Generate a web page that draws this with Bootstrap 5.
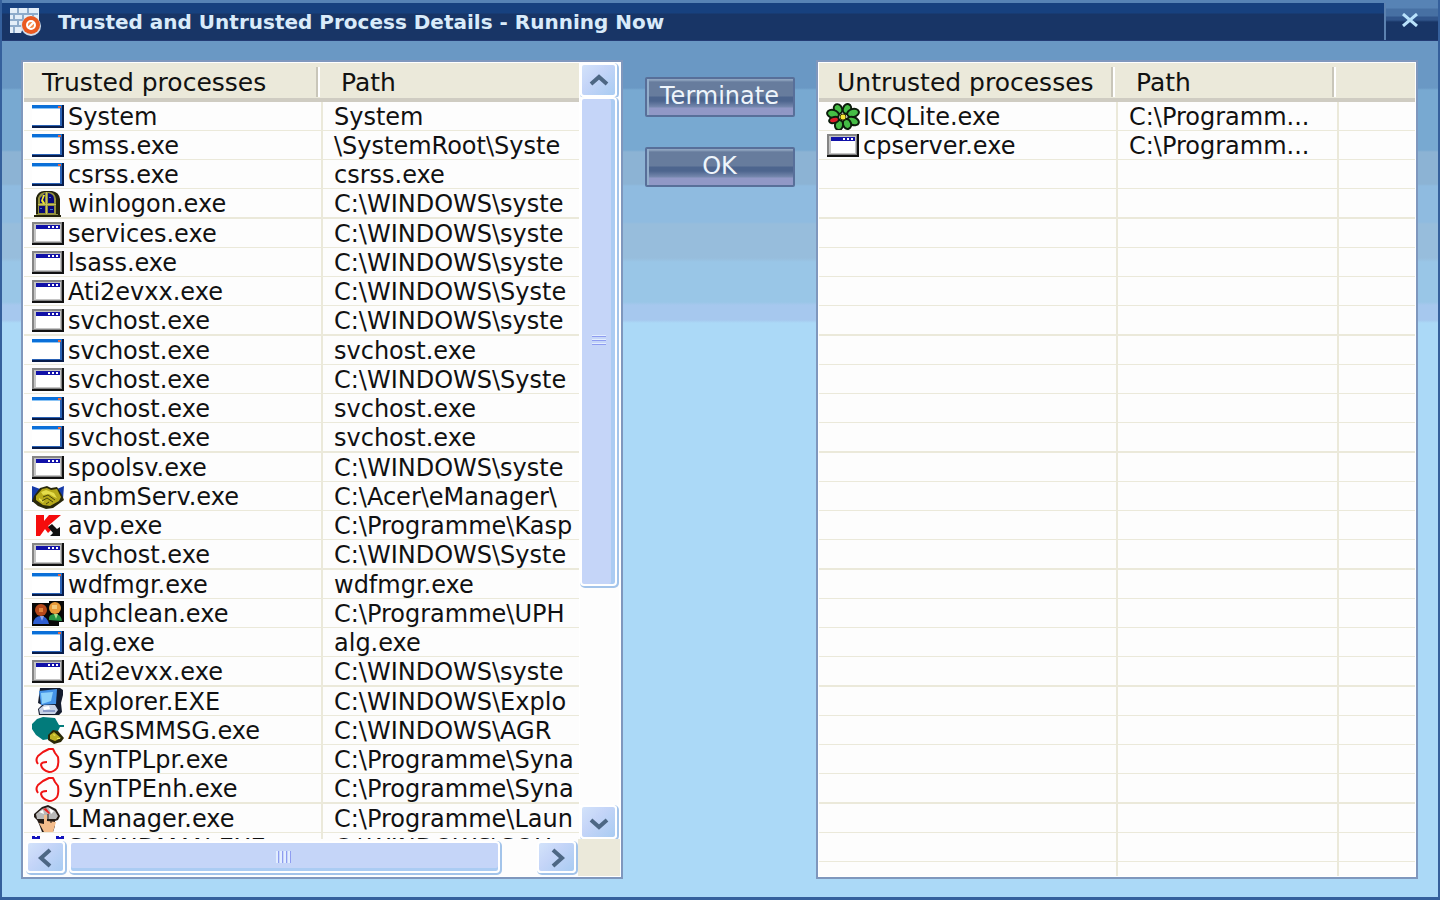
<!DOCTYPE html>
<html lang="en">
<head>
<meta charset="utf-8">
<meta name="viewport" content="width=device-width, initial-scale=1">
<title>Trusted and Untrusted Process Details - Running Now</title>
<link href="https://cdn.jsdelivr.net/npm/bootstrap@5.3.0/dist/css/bootstrap.min.css" rel="stylesheet">
<style>
  :root { --beige: #ebe9da; --navy: #183566; --sb: #c5d5f8; }
  body { font-family: "DejaVu Sans", sans-serif; font-size: 24px; line-height: 28px; color: #111; }
  .app-window {
    height: 100vh; min-height: 500px;
    border: solid #35609c; border-width: 0 2px 3px 2px;
    background: linear-gradient(#6a98c4 88px, #78a9d1 90px 150px, #8cb3d4 152px 184px, #8fbbe0 186px 222px,
      #97bddc 224px 258px, #99c6e7 262px 302px, #a6c8ee 305px 320px, #abd9f7 323px);
  }
  .title-bar {
    height: 41px; border-top: 3px solid #5783b5; border-bottom: 1px solid #243c75;
    background: linear-gradient(#17417f 10px, var(--navy) 11px);
  }
  .title-bar h1 { font-size: 20px; line-height: 24px; color: #d9ebfa; }
  .btn-shut {
    width: 54px; height: 37px; border-radius: 0; border: 0; border-left: 2px solid #5c82b0;
    background: linear-gradient(#5783b5 5px, #4770a3 6px 13px, #31558b 14px 17px, var(--navy) 19px);
  }
  .btn-shut:hover { filter: brightness(1.15); }
  .btn-shut svg { margin: 0 4px 5px 0; }
  .work-area { padding: 19px 20px 18px 19px; }
  .list-pane { flex: 1 1 0; background: #fff; border: 2px solid #7f97bd; padding: 1px; }
  .list-pane .viewport { background: #fdfdfd; }
  .proc-table { table-layout: fixed; width: 100%; border-collapse: separate; border-spacing: 0; }
  .proc-table th {
    height: 39px; padding: 4px 0 0 18px; font-weight: 400; background: var(--beige);
    border-bottom: 4px solid #cfccc2; position: relative; white-space: nowrap; font-size: 25px;
  }
  .proc-table th.split::after {
    content: ""; position: absolute; right: 3px; top: 4px; height: 30px; width: 4px;
    border-left: 2px solid #c9c6b9; border-right: 2px solid #fff;
  }
  .proc-table td {
    height: 29px; line-height: 26px; padding: 2px 0 0 11px; white-space: nowrap; overflow: hidden;
    border-bottom: 1px solid #ebe9da; border-right: 2px solid #ebe9da;
  }
  .proc-table td:first-child { padding-left: 7px; }
  .proc-table td:last-child { border-right: 0; }
  .proc-table tr:nth-child(4n) td { height: 30px; border-bottom-width: 2px; }
  .proc-table svg { width: 34px; height: 28px; display: block; flex: none; }
  .proc-name { height: 26px; gap: 3px; }
  .col-name { width: 299px; } .col-path { width: 221px; }
  .btn-glossy {
    width: 150px; height: 40px; padding: 0 0 2px; border: 2px solid #586f99; border-radius: 2px; color: #eef5fb; font-size: 24px; line-height: 28px;
    background: linear-gradient(#8fa4bf 1px, #677c9d 3px 17px, #4d658e 18px 22px, #7688ae 28px, #9198c6 29px);
    box-shadow: inset 2px 0 0 #93aecb;
  }
  .btn-glossy:hover { color: #fff; filter: brightness(1.1); }
  .side-buttons { width: 193px; padding-top: 17px; gap: 30px; }
  .v-scroll { width: 41px; padding: 0 1px; }
  .h-scroll { height: 37px; background: #fdfdfd; padding: 2px 2px 1px; }
  .sb-part {
    border: 2px solid #fff; border-radius: 4px; padding: 0;
    background: linear-gradient(135deg, #d3e3fa, var(--sb) 40%, #a9ccf2);
    box-shadow: 1px 1px 0 1px #a3c4ea;
  }
  .sb-part svg { width: 22px; height: 22px; }
  .sb-part.thumb { background: var(--sb); }
  .v-scroll .sb-part { width: 37px; }
  .v-scroll .sb-btn { height: 34px; }
  .v-scroll .thumb { height: 69%; box-shadow: 1px 1px 0 1px #a3c4ea, inset -4px 0 0 #abccf3; }
  .v-scroll .track { background: #fdfdfd; }
  .h-scroll .sb-btn { width: 39px; height: 32px; }
  .h-scroll .thumb { height: 32px; width: 92%; box-shadow: 1px 1px 0 1px #a3c4ea, inset 0 -3px 0 #abccf3; }
  .grip-v { width: 14px; height: 12px; background: repeating-linear-gradient(#e2edff 0 1px, #8e9cf0 1px 2px, #c5d5f8 2px 4px); }
  .grip-h { width: 16px; height: 12px; background: repeating-linear-gradient(90deg, #e2edff 0 2px, #8e9cf0 2px 3px, #c5d5f8 3px 4px); }
  .corner { width: 42px; background: var(--beige); }
</style>
</head>
<body>
<svg class="d-none" aria-hidden="true">
  <symbol id="i-blank" viewBox="0 0 34 28">
    <path fill="#fff" d="M1 2h31v22H1z"/><path fill="#0a6fd8" d="M1 2h30v3H1z"/><path fill="#8cc4f5" d="M1 5h29v1H1z"/>
    <path fill="#e8683c" d="M27 3h3v2h-3z"/><path fill="#2a62b5" d="M29 5h2v18h-2zM1 22h29v1H1z"/><path fill="#071c4a" d="M31 2h2v23H1v-2h30z"/>
  </symbol>
  <symbol id="i-app" viewBox="0 0 34 28">
    <path fill="#858585" d="M1 2h31v22H1z"/><path fill="#c4c4c4" d="M3 4h27v18H3z"/><path fill="#fff" d="M5 9h24v12H5z"/>
    <path fill="#1111a8" d="M5 5h24v4H5z"/><path fill="#fff" d="M17 6h2v2h-2zM21 6h2v2h-2zM25 6h2v2h-2z"/><path fill="#111" d="M31 2h2v23H1v-2h30z"/>
  </symbol>
  <symbol id="i-window" viewBox="0 0 34 28">
    <path fill="#23220c" d="M5 25V8q2-7 8-7h8q7 1 8 8v16h1v2H3v-2z"/><path fill="#93913f" d="M7 24V8q2-6 8-6h3q6 0 7 7v15h2v1H5v-1z"/>
    <path fill="#080878" d="M9 13V8l5-5v10zM17 3q6 1 6 6v4h-6zM8 16h6v7H8zM17 16h6v7h-6z"/><path fill="#f1e62d" d="m12 5-2 6 3 4 1-2-2-3 2-5z"/>
    <path fill="#c9c35a" d="M7 14h18v1H7zM15 2h1v22h-1z"/><path fill="#4472c8" d="M18 7h2v1h-2zM9 18h2v1H9zM19 19h3v1h-3z"/>
  </symbol>
  <symbol id="i-shake" viewBox="0 0 34 28">
    <path fill="#153aa8" d="m1 3 8 3v12l-8 1zM33 3l-7 3v12l6-2z"/><path fill="#29280a" d="m3 13 6-8 7-2 4 2 6-1 5 8 2 5-4 3-7 5-7 1-8-3-6-5z"/>
    <path fill="#b6a91a" d="m5 13 6-7 5-1 4 2 6-1 4 8-2 4-9 5-7-1-7-5z"/><path fill="#e5dd4b" d="m10 9 5-2 8 3 3 5-3-1-5-3-6 1zM8 15l5 3-1 2-4-3z"/>
    <path fill="none" stroke="#4b470a" d="m12 14 5-2 7 5M11 18l5-3 6 4M15 21l3-2"/>
  </symbol>
  <symbol id="i-k" viewBox="0 0 34 28">
    <path fill="#f50c0c" d="M5 3h8v6l5-6h12L17 14l3 4-3 3-3-4-5 7H5z"/><path fill="#111" d="m17 15 4-3 5 5 3-2v9H19l3-3z"/>
  </symbol>
  <symbol id="i-users" viewBox="0 0 34 28">
    <path fill="#080808" d="M1 3h17V1h15v21h-5v4H1z"/><circle cx="10" cy="10" r="6" fill="#b5481b"/><circle cx="24" cy="8" r="6" fill="#e99b3a"/>
    <path fill="#f4ca7b" d="M21 5h5v4h-5z"/><path fill="#e3843d" d="M8 8h4v4H8z"/><path fill="#2e5ed2" d="M2 24q1-8 8-8 6 0 8 8z"/><path fill="#269344" d="M18 20q-1-6 6-6 6 0 7 7z"/>
    <path fill="#8ca4ef" d="m9 16 2 5 2-5z"/><path fill="#a9df8e" d="m23 14 2 5 2-5z"/>
  </symbol>
  <symbol id="i-pc" viewBox="0 0 34 28">
    <path fill="#151c2e" d="M9 0h20l3 2v5l-2 8 1 9-3 3H8l-1-6 4-4-4-2z"/><path fill="#4493e8" d="m8 3 18-2-1 15-15 1z"/><path fill="#8ed2fb" d="m10 5 12-1-2 9-9 3z"/>
    <path fill="#c8d2e6" d="m8 21 5-4h11l3 5-3 4H9z"/><path fill="#8b9cc9" d="M12 22h12v2H12z"/><path fill="#fff" d="m12 19 6-1 1 3-6 1z"/>
  </symbol>
  <symbol id="i-globe" viewBox="0 0 34 28">
    <path fill="#027b7b" d="M1 7 6 2l6-2 12 1 4 7h5v2h-4l-3 6-8 6-6 1-7-5-4-6z"/><path fill="#2a2907" d="m17 18 5-5 5 1 6 7-3 4-7 2-6-4z"/><path fill="#bdb223" d="m19 18 4-3 7 6-6 3-5-2z"/><path fill="#f1e75b" d="m22 17 3 1-2 1zM26 21h3v1h-3z"/>
  </symbol>
  <symbol id="i-syn" viewBox="0 0 34 28">
    <path fill="none" stroke="#f01414" stroke-width="2" stroke-linejoin="round" d="M7 18q-3-4 0-8l5-4 6-3 4 0 2 4 3 4q1 7-1 11-3 4-8 4-7-2-8-7 0-3 6-3"/>
  </symbol>
  <symbol id="i-hand" viewBox="0 0 34 28">
    <path fill="#231a15" d="m3 9 8-7 6-2 8 4 4 7-2 4-3 1v5l-2 6H11l-3-8-2-4-3-3z"/><path fill="#b9b9b9" d="m5 9 6-5 6-2 7 4 3 5-2 3H6z"/><path fill="#fff" d="m18 3 5 3-3 3zM8 7l4-2 1 4z"/><path fill="#eb2323" d="m12 4 3-1 4 5-1 1z"/>
    <path fill="#f4bd8c" d="M13 10h3v6l9 1-3 10h-9l-5-9 5 1z"/><path stroke="#231a15" d="M17 9v6M20 15v3"/>
  </symbol>
  <symbol id="i-sound" viewBox="0 0 34 28"><path fill="#1212bd" d="M1 2h3v1h2V2h3v5H1zM25 2h3v1h2V2h3v5h-8z"/></symbol>
  <symbol id="i-flower" viewBox="0 0 34 28">
    <g fill="#45bd45" stroke="#0c1c0c" stroke-width="2">
      <ellipse cx="12" cy="6" rx="4" ry="5" transform="rotate(-25 12 6)"/><ellipse cx="21" cy="6" rx="4" ry="5" transform="rotate(20 21 6)"/>
      <ellipse cx="7" cy="11" rx="6" ry="4" transform="rotate(15 7 11)"/><ellipse cx="27" cy="10" rx="6" ry="4" transform="rotate(-15 27 10)"/>
      <ellipse cx="27" cy="18" rx="6" ry="4" transform="rotate(20 27 18)"/><ellipse cx="21" cy="21" rx="4" ry="5" transform="rotate(-20 21 21)"/><ellipse cx="13" cy="22" rx="4" ry="5" transform="rotate(10 13 22)"/>
      <ellipse cx="8" cy="17" rx="5" ry="3" fill="#df1a28" transform="rotate(-15 8 17)"/>
    </g><circle cx="17" cy="14" r="3" fill="#f7e635" stroke="#3d3a06"/>
  </symbol>
</svg>

<div class="app-window d-flex flex-column overflow-hidden">
  <header class="title-bar d-flex align-items-center flex-shrink-0">
    <svg class="ms-1 me-3 flex-shrink-0" width="36" height="32" viewBox="0 0 36 32" aria-hidden="true">
      <path fill="#e3eef8" d="M4 2h29v12H20l-5 13H4z"/>
      <path stroke="#8eaccb" stroke-width="2" fill="none" d="M4 8h28M4 14h20M4 20h12M12 2v6M22 2v6M8 8v6M17 8v6M27 8v6M12 14v6M8 20v7"/>
      <circle cx="25" cy="20" r="10" fill="#cfdcea"/><circle cx="25" cy="19" r="9" fill="#ea5a20"/>
      <circle cx="25" cy="19" r="4" fill="#f58b4a" stroke="#fff" stroke-width="2"/><path stroke="#fff" stroke-width="2" d="m22 22 6-6"/>
    </svg>
    <h1 class="mb-0 fw-bold text-nowrap flex-grow-1">Trusted and Untrusted Process Details - Running Now</h1>
    <button type="button" class="btn btn-shut p-0 flex-shrink-0" aria-label="Close">
      <svg width="18" height="14" viewBox="0 0 18 14"><path d="m2 1 14 12M16 1 2 13" stroke="#b9e2fb" stroke-width="3"/></svg>
    </button>
  </header>

  <main class="work-area d-flex flex-grow-1 overflow-hidden">
    <section class="list-pane d-flex flex-column overflow-hidden">
      <div class="d-flex flex-grow-1 overflow-hidden">
        <div class="viewport flex-grow-1 overflow-hidden">
          <table class="proc-table">
            <colgroup><col class="col-name"><col></colgroup>
            <thead><tr><th scope="col" class="split">Trusted processes</th><th scope="col">Path</th></tr></thead>
            <tbody id="trusted"></tbody>
          </table>
        </div>
        <div class="v-scroll d-flex flex-column flex-shrink-0">
          <button type="button" class="sb-part sb-btn" aria-label="Scroll up"><svg viewBox="0 0 22 22"><path d="m3 14 8-7 8 7" fill="none" stroke="#4d6784" stroke-width="4"/></svg></button>
          <div class="track flex-grow-1"><div class="sb-part thumb d-flex align-items-center justify-content-center"><span class="grip-v"></span></div></div>
          <button type="button" class="sb-part sb-btn" aria-label="Scroll down"><svg viewBox="0 0 22 22"><path d="m3 8 8 7 8-7" fill="none" stroke="#4d6784" stroke-width="4"/></svg></button>
        </div>
      </div>
      <div class="d-flex flex-shrink-0">
        <div class="h-scroll d-flex flex-grow-1">
          <button type="button" class="sb-part sb-btn" aria-label="Scroll left"><svg viewBox="0 0 22 22"><path d="m15 3-9 8 9 8" fill="none" stroke="#4d6784" stroke-width="4"/></svg></button>
          <div class="flex-grow-1 ps-1"><div class="sb-part thumb d-flex align-items-center justify-content-center"><span class="grip-h"></span></div></div>
          <button type="button" class="sb-part sb-btn" aria-label="Scroll right"><svg viewBox="0 0 22 22"><path d="m7 3 9 8-9 8" fill="none" stroke="#4d6784" stroke-width="4"/></svg></button>
        </div>
        <div class="corner"></div>
      </div>
    </section>

    <div class="side-buttons d-flex flex-column align-items-center flex-shrink-0">
      <button type="button" class="btn btn-glossy">Terminate</button>
      <button type="button" class="btn btn-glossy">OK</button>
    </div>

    <section class="list-pane overflow-hidden">
      <div class="viewport h-100 overflow-hidden">
        <table class="proc-table">
          <colgroup><col class="col-name"><col class="col-path"><col></colgroup>
          <thead><tr><th scope="col" class="split">Untrusted processes</th><th scope="col" class="split">Path</th><th></th></tr></thead>
          <tbody id="untrusted"></tbody>
        </table>
      </div>
    </section>
  </main>
</div>

<script src="https://cdn.jsdelivr.net/npm/bootstrap@5.3.0/dist/js/bootstrap.bundle.min.js"></script>
<script>
  const trusted = [
    ['blank', 'System', 'System'],
    ['blank', 'smss.exe', '\\SystemRoot\\Syste'],
    ['blank', 'csrss.exe', 'csrss.exe'],
    ['window', 'winlogon.exe', 'C:\\WINDOWS\\syste'],
    ['app', 'services.exe', 'C:\\WINDOWS\\syste'],
    ['app', 'lsass.exe', 'C:\\WINDOWS\\syste'],
    ['app', 'Ati2evxx.exe', 'C:\\WINDOWS\\Syste'],
    ['app', 'svchost.exe', 'C:\\WINDOWS\\syste'],
    ['blank', 'svchost.exe', 'svchost.exe'],
    ['app', 'svchost.exe', 'C:\\WINDOWS\\Syste'],
    ['blank', 'svchost.exe', 'svchost.exe'],
    ['blank', 'svchost.exe', 'svchost.exe'],
    ['app', 'spoolsv.exe', 'C:\\WINDOWS\\syste'],
    ['shake', 'anbmServ.exe', 'C:\\Acer\\eManager\\'],
    ['k', 'avp.exe', 'C:\\Programme\\Kasp'],
    ['app', 'svchost.exe', 'C:\\WINDOWS\\Syste'],
    ['blank', 'wdfmgr.exe', 'wdfmgr.exe'],
    ['users', 'uphclean.exe', 'C:\\Programme\\UPH'],
    ['blank', 'alg.exe', 'alg.exe'],
    ['app', 'Ati2evxx.exe', 'C:\\WINDOWS\\syste'],
    ['pc', 'Explorer.EXE', 'C:\\WINDOWS\\Explo'],
    ['globe', 'AGRSMMSG.exe', 'C:\\WINDOWS\\AGR'],
    ['syn', 'SynTPLpr.exe', 'C:\\Programme\\Syna'],
    ['syn', 'SynTPEnh.exe', 'C:\\Programme\\Syna'],
    ['hand', 'LManager.exe', 'C:\\Programme\\Laun'],
    ['sound', 'SOUNDMAN.EXE', 'C:\\WINDOWS\\SOU']
  ];
  const untrusted = [
    ['flower', 'ICQLite.exe', 'C:\\Programm...'],
    ['app', 'cpserver.exe', 'C:\\Programm...']
  ];
  const row = ([icon, name, path], extra = '') =>
    `<tr><td><div class="proc-name d-flex align-items-center"><svg aria-hidden="true"><use href="#i-${icon}"/></svg><span>${name}</span></div></td><td>${path}</td>${extra}</tr>`;
  document.getElementById('trusted').innerHTML = trusted.map(r => row(r)).join('');
  document.getElementById('untrusted').innerHTML =
    untrusted.map(r => row(r, '<td></td>')).join('') + '<tr><td></td><td></td><td></td></tr>'.repeat(25);
</script>
</body>
</html>
